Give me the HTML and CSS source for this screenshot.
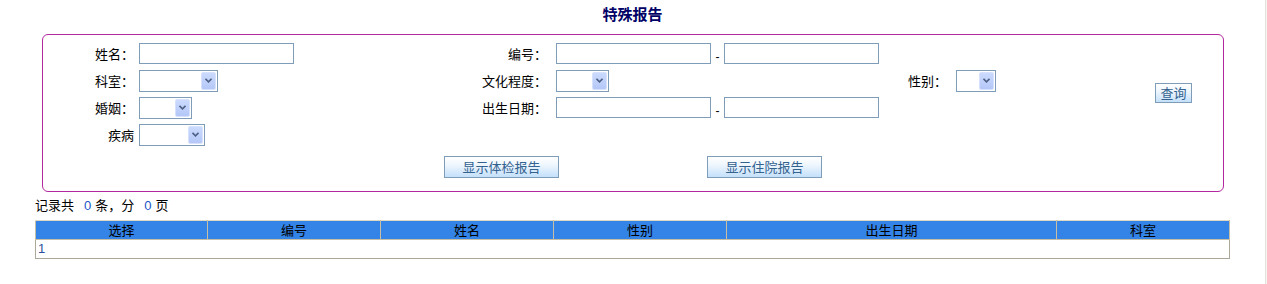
FILE: index.html
```html
<!DOCTYPE html>
<html lang="zh-CN">
<head>
<meta charset="utf-8">
<title>特殊报告</title>
<link rel="stylesheet" href="styles.css">
</head>
<body>
<div class="page">
  <div class="title">特殊报告</div>
  <div class="box">
    <div class="grid">
      <label class="lbl c1 r1">姓名：</label>
      <div class="fld c2 r1"><span class="txt"></span></div>
      <label class="lbl c3 r1">编号：</label>
      <div class="fld c4 r1"><span class="txt"></span><span class="dash">-</span><span class="txt"></span></div>

      <label class="lbl c1 r2">科室：</label>
      <div class="fld c2 r2"><span class="sel w79"><span class="sel-btn"><svg width="7" height="5" viewBox="0 0 7 5"><path d="M0.5 0.8 L3.5 3.8 L6.5 0.8" fill="none" stroke="#4d6185" stroke-width="1.6"/></svg></span></span></div>
      <label class="lbl c3 r2">文化程度：</label>
      <div class="fld c4 r2"><span class="sel w53"><span class="sel-btn"><svg width="7" height="5" viewBox="0 0 7 5"><path d="M0.5 0.8 L3.5 3.8 L6.5 0.8" fill="none" stroke="#4d6185" stroke-width="1.6"/></svg></span></span></div>
      <label class="lbl c5 r2">性别：</label>
      <div class="fld c6 r2"><span class="sel w40"><span class="sel-btn"><svg width="7" height="5" viewBox="0 0 7 5"><path d="M0.5 0.8 L3.5 3.8 L6.5 0.8" fill="none" stroke="#4d6185" stroke-width="1.6"/></svg></span></span></div>
      <div class="fld c7 query"><button class="btn btn-q">查询</button></div>

      <label class="lbl c1 r3">婚姻：</label>
      <div class="fld c2 r3"><span class="sel w53"><span class="sel-btn"><svg width="7" height="5" viewBox="0 0 7 5"><path d="M0.5 0.8 L3.5 3.8 L6.5 0.8" fill="none" stroke="#4d6185" stroke-width="1.6"/></svg></span></span></div>
      <label class="lbl c3 r3">出生日期：</label>
      <div class="fld c4 r3"><span class="txt"></span><span class="dash">-</span><span class="txt"></span></div>

      <label class="lbl c1 r4">疾病</label>
      <div class="fld c2 r4"><span class="sel w66"><span class="sel-btn"><svg width="7" height="5" viewBox="0 0 7 5"><path d="M0.5 0.8 L3.5 3.8 L6.5 0.8" fill="none" stroke="#4d6185" stroke-width="1.6"/></svg></span></span></div>
    </div>
    <div class="actions">
      <button class="btn btn-wide">显示体检报告</button>
      <button class="btn btn-wide">显示住院报告</button>
    </div>
  </div>
  <div class="stats">记录共<span class="num">0</span>条，分<span class="num">0</span>页</div>
  <table class="list">
    <colgroup>
      <col class="w172"><col class="w173"><col class="w173"><col class="w173"><col class="w330"><col class="w173">
    </colgroup>
    <thead>
      <tr><th>选择</th><th>编号</th><th>姓名</th><th>性别</th><th>出生日期</th><th>科室</th></tr>
    </thead>
    <tbody>
      <tr><td class="idx" colspan="6">1</td></tr>
    </tbody>
  </table>
</div>
</body>
</html>
```

FILE: styles.css
```css
html {
  background: #f6f5f0;
}
body {
  margin: 0;
  font-family: "Liberation Sans", "Noto Sans CJK SC", sans-serif;
  font-size: 13px;
  color: #000;
}
.page {
  width: 1265px;
  height: 284px;
  background: #fff;
  border-right: 1px solid #e4e2da;
  overflow: hidden;
}
.title {
  height: 28px;
  line-height: 28px;
  text-align: center;
  font-size: 15px;
  font-weight: bold;
  color: #000066;
  font-family: "Noto Sans CJK SC", sans-serif;
}
.box {
  margin: 6px 41px 0 42px;
  border: 1px solid #b1289f;
  border-radius: 6px;
  padding: 5px 0 13px 0;
}
.grid {
  display: grid;
  grid-template-columns: 96px 261px 156px 324px 76px 199px 1fr;
  grid-template-rows: repeat(4, 27px);
}
.c1 { grid-column: 1; }
.c2 { grid-column: 2; }
.c3 { grid-column: 3; }
.c4 { grid-column: 4; }
.c5 { grid-column: 5; }
.c6 { grid-column: 6; }
.c7 { grid-column: 7; }
.r1 { grid-row: 1; }
.r2 { grid-row: 2; }
.r3 { grid-row: 3; }
.r4 { grid-row: 4; }
.lbl {
  display: flex;
  align-items: center;
  justify-content: flex-end;
  white-space: nowrap;
}
.c1.lbl { padding-right: 5px; }
.c3.lbl { padding-right: 9px; }
.c5.lbl { padding-right: 9px; }
.fld {
  display: flex;
  align-items: center;
}
.query {
  grid-row: 2 / 4;
  padding-bottom: 3px;
}
.txt {
  display: block;
  width: 155px;
  height: 21px;
  box-sizing: border-box;
  border: 1px solid #7f9db9;
  background: #fff;
}
.dash {
  width: 13px;
  text-align: center;
  padding-top: 6px;
  line-height: 12px;
  font-size: 12px;
}
.sel {
  display: flex;
  justify-content: flex-end;
  align-items: stretch;
  height: 22px;
  box-sizing: border-box;
  border: 1px solid #7f9db9;
  background: #fff;
  padding: 1px 1px 1px 0;
}
.w79 { width: 79px; }
.w53 { width: 53px; }
.w40 { width: 40px; }
.w66 { width: 66px; }
.sel-btn {
  width: 15px;
  box-sizing: border-box;
  border: 1px solid #d6e2fd;
  border-radius: 2px;
  background: linear-gradient(#cbdafd, #b4c7f7);
  display: flex;
  align-items: center;
  justify-content: center;
}
.btn {
  font-family: "Noto Sans CJK SC", sans-serif;
  font-size: 13px;
  color: #33628f;
  border: 1px solid #7f9db9;
  background: linear-gradient(#ffffff 0%, #eef6fe 40%, #c4e0fb 100%);
  padding: 0;
  line-height: 18px;
  cursor: pointer;
}
.btn-q {
  width: 37px;
  height: 20px;
}
.actions {
  display: flex;
  justify-content: center;
  gap: 148px;
  margin-top: 8px;
}
.btn-wide {
  width: 115px;
  height: 22px;
}
.stats {
  margin-top: 4px;
  padding-left: 35px;
  height: 20px;
  line-height: 20px;
}
.num {
  color: #1c56c8;
  margin: 0 4px 0 10px;
}
.list {
  margin-top: 4px;
  margin-left: 35px;
  width: 1195px;
  border-collapse: collapse;
  table-layout: fixed;
  border: 1px solid #aca899;
}
.w172 { width: 172px; }
.w173 { width: 173px; }
.w330 { width: 330px; }
.list th {
  background: #3483e6;
  font-weight: normal;
  height: 18px;
  line-height: 17px;
  padding: 0;
  text-align: center;
  vertical-align: top;
  border: 1px solid #c6bea5;
  border-top-color: #dcd7c6;
  font-family: "Noto Sans CJK SC", sans-serif;
}
.list td {
  height: 18px;
  padding: 0 0 0 2px;
  line-height: 18px;
  border: 0;
}
.idx {
  color: #2a4f9a;
}
```
